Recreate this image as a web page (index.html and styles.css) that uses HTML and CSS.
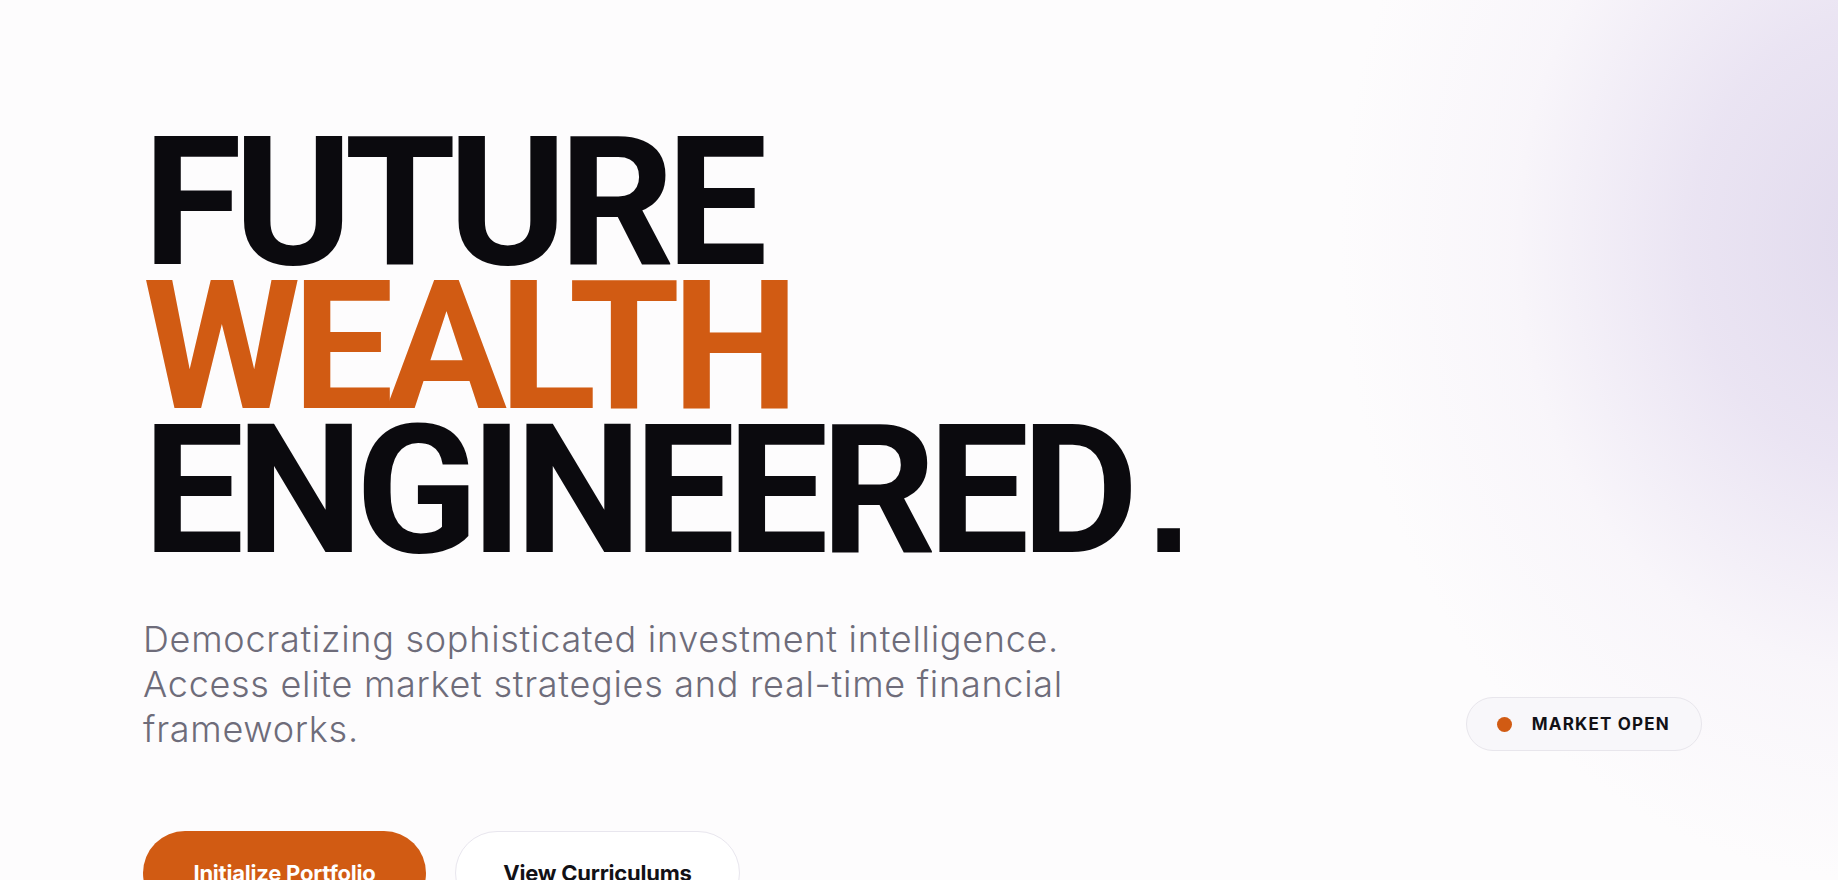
FILE: index.html
```html
<!DOCTYPE html>
<html lang="en">
<head>
<meta charset="utf-8">
<title>Future Wealth Engineered</title>
<link rel="stylesheet" href="styles.css">
</head>
<body>
<main class="hero">
  <h1 class="title">
    <span class="line">FUTURE</span>
    <span class="line accent">WEALTH</span>
    <span class="line">ENGINEERED<span class="dot-end">.</span></span>
  </h1>
  <div class="row">
    <p class="lead">Democratizing sophisticated investment intelligence.<br>Access elite market strategies and real-time financial<br>frameworks.</p>
    <div class="badge"><span class="pulse"></span><span class="badge-text">MARKET OPEN</span></div>
  </div>
  <div class="actions">
    <a class="btn btn-primary" href="#">Initialize Portfolio</a>
    <a class="btn btn-ghost" href="#">View Curriculums</a>
  </div>
</main>
</body>
</html>
```

FILE: styles.css
```css
* { box-sizing: border-box; }
html, body { margin: 0; padding: 0; }
body {
  width: 1838px;
  height: 880px;
  overflow: hidden;
  background-color: #fdfcfd;
  background-image:
    radial-gradient(ellipse 540px 640px at 1880px 240px, rgba(225,218,237,1) 0%, rgba(231,224,241,0.85) 35%, rgba(243,238,247,0.45) 68%, rgba(253,252,253,0) 100%);
  background-repeat: no-repeat;
  font-family: Inter, "Open Sans", sans-serif;
}
.hero {
  padding: 0 136px 0 143px;
  display: flex;
  flex-direction: column;
}
.title {
  margin: 131px 0 0 0;
  font-family: Roboto, sans-serif;
  font-weight: 700;
  font-size: 180px;
  line-height: 144px;
  letter-spacing: -0.044em;
  color: #0b0a0e;
}
.line { display: block; }
.accent { color: #d15b13; }
.dot-end {
  margin-left: 16px;
  font-family: "Liberation Sans", Arial, sans-serif;
  font-size: 160px;
  line-height: 0;
}
.row {
  display: flex;
  justify-content: space-between;
  align-items: flex-end;
  margin-top: 54px;
}
.lead {
  margin: 0;
  font-family: Inter, sans-serif;
  font-weight: 300;
  font-size: 36px;
  line-height: 45px;
  color: #6e6c7a;
  white-space: nowrap;
  letter-spacing: 0.02em;
}
.badge {
  display: flex;
  align-items: center;
  gap: 20px;
  height: 54px;
  padding: 0 31px 0 30px;
  border-radius: 27px;
  background: #f8f7fa;
  border: 1px solid #e8e6ec;
  margin-bottom: 1px;
}
.pulse {
  width: 15px;
  height: 15px;
  border-radius: 50%;
  background: #d15b13;
}
.badge-text {
  font-family: Inter, sans-serif;
  font-weight: 700;
  font-size: 17px;
  letter-spacing: 1.2px;
  color: #121116;
  white-space: nowrap;
}
.actions {
  display: flex;
  gap: 29px;
  margin-top: 79px;
}
.btn {
  display: inline-flex;
  align-items: center;
  justify-content: center;
  height: 84px;
  border-radius: 42px;
  font-family: Inter, sans-serif;
  font-weight: 700;
  font-size: 22px;
  letter-spacing: -0.01em;
  text-decoration: none;
  white-space: nowrap;
}
.btn-primary {
  background: #d15b13;
  color: #ffffff;
  width: 283px;
}
.btn-ghost {
  background: #ffffff;
  color: #121116;
  border: 1px solid #e8e6ee;
  width: 285px;
}
```
